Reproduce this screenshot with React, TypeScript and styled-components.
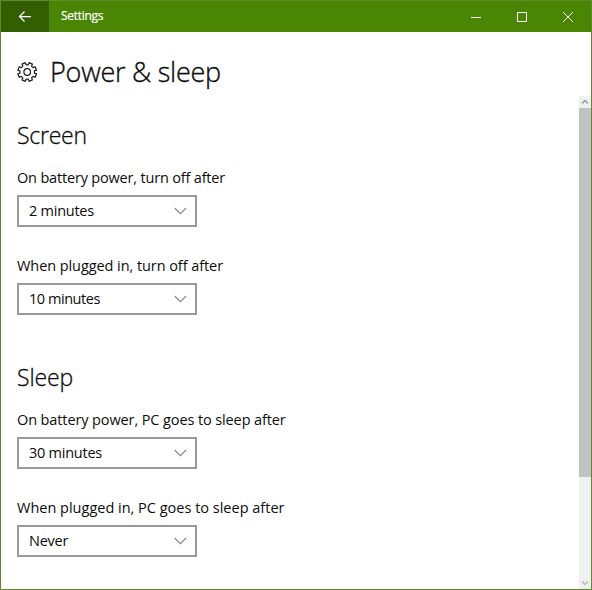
import React from "react";
import styled, { createGlobalStyle } from "styled-components";

const GlobalStyle = createGlobalStyle`
  *, *::before, *::after { box-sizing: border-box; }
  body { margin: 0; background: #fff; }
  button { font: inherit; color: inherit; border: 0; padding: 0; background: none; }
`;

const Window = styled.div`
  width: 592px;
  height: 590px;
  display: flex;
  flex-direction: column;
  border: 1px solid #5d8a2a;
  background: #fff;
  color: #0c0c0c;
  font-family: "Open Sans", "Noto Sans", sans-serif;
  overflow: hidden;
`;

const TitleBar = styled.header`
  flex: 0 0 31px;
  display: flex;
  background: #4a8503;
  color: #fff;
`;

const BackButton = styled.button`
  width: 48px;
  display: grid;
  place-items: center;
  background: #335f02;
`;

const WindowTitle = styled.span`
  flex: 1;
  padding-left: 12px;
  font-size: 12px;
  line-height: 30px;
  letter-spacing: -0.3px;
  -webkit-text-stroke: 0.2px #fff;
`;

const CaptionButton = styled.button`
  width: 46px;
  display: grid;
  place-items: center;
`;

const PageHeader = styled.div`
  flex: 0 0 64px;
  display: flex;
  align-items: center;
  padding: 16px 0 0 16px;
`;

const PageTitle = styled.h1`
  margin: 0 0 0 12px;
  font-size: 27px;
  font-weight: 300;
  line-height: 40px;
  height: 24px;
  display: flex;
  align-items: center;
  letter-spacing: -0.25px;
  -webkit-text-stroke: 0.35px currentColor;
`;

const Body = styled.div`
  flex: 1;
  min-height: 0;
  display: flex;
`;

const Content = styled.main`
  flex: 1;
  padding: 23px 0 0 16px;
`;

const Section = styled.section`
  & + & { margin-top: 46px; }
`;

const SectionTitle = styled.h2<{ $spacing: number }>`
  margin: 0 0 17px;
  font-size: 23px;
  font-weight: 300;
  line-height: 32px;
  letter-spacing: ${(p) => p.$spacing}px;
  -webkit-text-stroke: 0.3px currentColor;
`;

const Field = styled.div`
  & + & { margin-top: 29px; }
`;

const Label = styled.label<{ $spacing: number }>`
  display: block;
  height: 27px;
  font-size: 14.5px;
  line-height: 20px;
  letter-spacing: ${(p) => p.$spacing}px;
  white-space: nowrap;
`;

const Select = styled.button<{ $spacing: number }>`
  width: 180px;
  height: 32px;
  display: flex;
  align-items: center;
  justify-content: space-between;
  padding: 0 8px 0 10px;
  border: 2px solid #999;
  background: #fff;
  font-size: 14.5px;
  line-height: 20px;
  letter-spacing: ${(p) => p.$spacing}px;
`;

const ScrollBar = styled.div`
  width: 12px;
  display: flex;
  flex-direction: column;
  background: #f0f0f0;
`;

const ScrollArrow = styled.button`
  height: 12px;
  display: grid;
  place-items: center;
`;

const ScrollTrack = styled.div`
  flex: 1;
`;

const ScrollThumb = styled.div`
  height: 369px;
  background: #c2c2c2;
`;

const GEAR_TEETH = 8;

function gearPath(cx: number, cy: number): string {
  const points: string[] = [];
  const at = (radius: number, degrees: number) => {
    const a = (degrees * Math.PI) / 180;
    points.push(`${(cx + radius * Math.sin(a)).toFixed(2)} ${(cy - radius * Math.cos(a)).toFixed(2)}`);
  };
  for (let i = 0; i < GEAR_TEETH; i++) {
    const mid = (i + 0.5) * (360 / GEAR_TEETH);
    at(7.3, mid - 14);
    at(9.5, mid - 11);
    at(9.5, mid + 11);
    at(7.3, mid + 14);
  }
  return `M${points.join("L")}Z`;
}

const GearIcon = () => (
  <svg width="21" height="22" viewBox="0 0 21 22" fill="none" stroke="#222" strokeWidth="1.25" strokeLinejoin="round">
    <path d={gearPath(10.2, 11)} />
    <circle cx="10.2" cy="11" r="3.3" />
  </svg>
);

const BackIcon = () => (
  <svg width="14" height="12" viewBox="0 0 14 12" fill="none" stroke="#fff" strokeWidth="1.25">
    <path d="M13 5.5H1.5M6.5 .5l-5 5 5 5" />
  </svg>
);

const ChevronIcon = () => (
  <svg width="13" height="8" viewBox="0 0 13 8" fill="none" stroke="#858585" strokeWidth="1.1">
    <path d="M.7 1l5.7 5.7L12.1 1" />
  </svg>
);

const ArrowIcon = ({ d, color }: { d: string; color: string }) => (
  <svg width="8" height="6" viewBox="0 0 8 6" fill="none" stroke={color} strokeWidth="1.5">
    <path d={d} />
  </svg>
);

const CaptionIcon = ({ d }: { d: string }) => (
  <svg width="12" height="12" viewBox="0 0 12 12" fill="none" stroke="#fff" strokeWidth="1">
    <path d={d} />
  </svg>
);

const captionButtons = [
  { name: "Minimize", d: "M1 6.5h10" },
  { name: "Maximize", d: "M1.5 1.5h9v9h-9z" },
  { name: "Close", d: "M1 1l10 10M11 1L1 11" },
];

const sections = [
  {
    title: "Screen",
    spacing: -0.25,
    fields: [
      { label: "On battery power, turn off after", spacing: -0.18, value: "2 minutes", valueSpacing: -0.25 },
      { label: "When plugged in, turn off after", spacing: -0.07, value: "10 minutes", valueSpacing: -0.45 },
    ],
  },
  {
    title: "Sleep",
    spacing: -0.1,
    fields: [
      { label: "On battery power, PC goes to sleep after", spacing: -0.11, value: "30 minutes", valueSpacing: -0.25 },
      { label: "When plugged in, PC goes to sleep after", spacing: 0, value: "Never", valueSpacing: -0.25 },
    ],
  },
];

export default function App() {
  return (
    <>
      <GlobalStyle />
      <Window>
        <TitleBar>
          <BackButton aria-label="Back"><BackIcon /></BackButton>
          <WindowTitle>Settings</WindowTitle>
          {captionButtons.map((b) => (
            <CaptionButton key={b.name} aria-label={b.name}><CaptionIcon d={b.d} /></CaptionButton>
          ))}
        </TitleBar>
        <PageHeader>
          <GearIcon />
          <PageTitle>Power &amp; sleep</PageTitle>
        </PageHeader>
        <Body>
          <Content>
            {sections.map((s) => (
              <Section key={s.title}>
                <SectionTitle $spacing={s.spacing}>{s.title}</SectionTitle>
                {s.fields.map((f) => (
                  <Field key={f.label}>
                    <Label $spacing={f.spacing}>{f.label}</Label>
                    <Select $spacing={f.valueSpacing}>
                      {f.value}
                      <ChevronIcon />
                    </Select>
                  </Field>
                ))}
              </Section>
            ))}
          </Content>
          <ScrollBar>
            <ScrollArrow aria-label="Scroll up"><ArrowIcon d="M1 4.5l3-3 3 3" color="#999" /></ScrollArrow>
            <ScrollTrack><ScrollThumb /></ScrollTrack>
            <ScrollArrow aria-label="Scroll down"><ArrowIcon d="M1 1.5l3 3 3-3" color="#bbb" /></ScrollArrow>
          </ScrollBar>
        </Body>
      </Window>
    </>
  );
}
